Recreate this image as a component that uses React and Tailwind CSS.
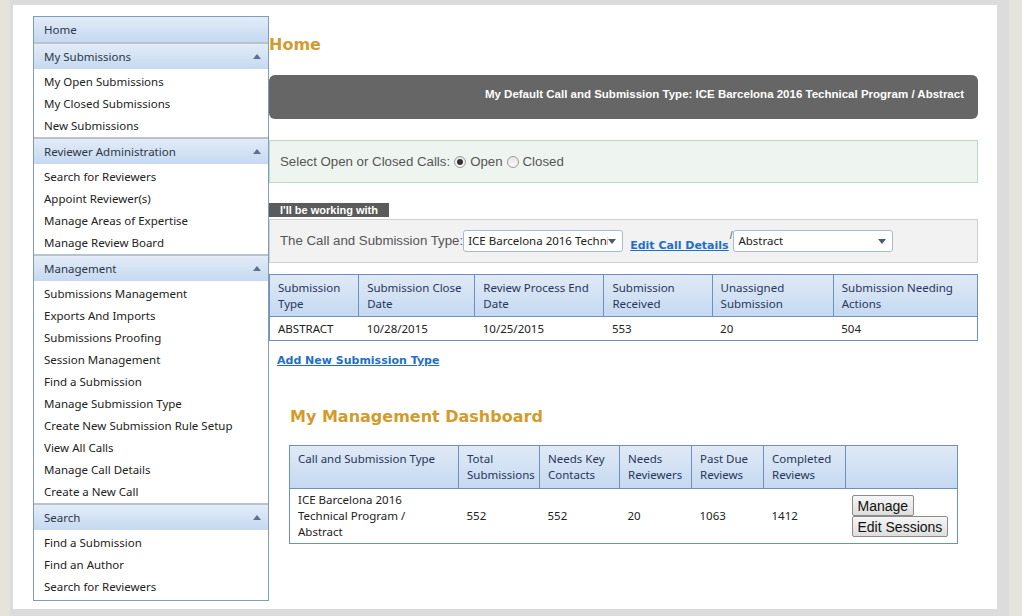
import React from 'react';

const SANS = { fontFamily: '"Noto Sans", "Open Sans", sans-serif' };
const ARIAL = { fontFamily: '"Liberation Sans", Arial, sans-serif' };
const VERDANA = { fontFamily: '"DejaVu Sans", Verdana, sans-serif' };

const MENU = [
  { title: 'My Submissions', items: ['My Open Submissions', 'My Closed Submissions', 'New Submissions'] },
  {
    title: 'Reviewer Administration',
    items: ['Search for Reviewers', 'Appoint Reviewer(s)', 'Manage Areas of Expertise', 'Manage Review Board'],
  },
  {
    title: 'Management',
    items: [
      'Submissions Management',
      'Exports And Imports',
      'Submissions Proofing',
      'Session Management',
      'Find a Submission',
      'Manage Submission Type',
      'Create New Submission Rule Setup',
      'View All Calls',
      'Manage Call Details',
      'Create a New Call',
    ],
  },
  { title: 'Search', items: ['Find a Submission', 'Find an Author', 'Search for Reviewers'] },
];

function Caret() {
  return (
    <svg width="8" height="5" viewBox="0 0 8 5" className="mr-[7px]">
      <polygon points="4,0 8,5 0,5" fill="#5d6f92" />
    </svg>
  );
}

function Sidebar() {
  return (
    <nav
      className="w-[236px] shrink-0 self-start border border-[#7f9dbc] bg-white text-[11.5px] text-[#222] pb-[2px]"
      style={SANS}
    >
      <div className="h-[25px] flex items-center pl-[10px] bg-gradient-to-b from-[#e3ecf7] to-[#c5d9f1] text-[#2d3747]">
        Home
      </div>
      {MENU.map((g) => (
        <div key={g.title} className="border-t-2 border-[#b9c3ce]">
          <div className="h-[25px] flex items-center justify-between pl-[10px] bg-gradient-to-b from-[#e3ecf7] to-[#c5d9f1] text-[#2d3747]">
            <span>{g.title}</span>
            <Caret />
          </div>
          <ul className="pt-[2px]">
            {g.items.map((it) => (
              <li key={it} className="h-[22px] flex items-center pl-[10px]">
                {it}
              </li>
            ))}
          </ul>
        </div>
      ))}
    </nav>
  );
}

function Radio({ checked }) {
  return (
    <span className="inline-flex w-[12px] h-[12px] rounded-full border border-[#9a9a9a] bg-gradient-to-b from-[#e6e6e6] to-[#fafafa] items-center justify-center mx-[4px]">
      {checked && <span className="w-[6px] h-[6px] rounded-full bg-[#333]" />}
    </span>
  );
}

function SelectBox({ text, width }) {
  return (
    <div
      className="h-[22px] shrink-0 flex items-center justify-between border border-[#a9b9cf] rounded-[3px] bg-white pl-[4px] pr-[6px] overflow-hidden"
      style={{ width }}
    >
      <span className="text-[11.5px] text-[#222] whitespace-nowrap overflow-hidden" style={SANS}>
        {text}
      </span>
      <svg width="8" height="5" viewBox="0 0 8 5" className="shrink-0">
        <polygon points="0,0 8,0 4,5" fill="#4b5a78" />
      </svg>
    </div>
  );
}

const TH = 'text-left font-normal align-top px-[8px] pt-[5px] pb-[4px] border-r border-[#6e90bb] leading-[16px]';

function SubmissionTable() {
  const heads = [
    ['Submission', 'Type', 89],
    ['Submission Close', 'Date', 116],
    ['Review Process End', 'Date', 129],
    ['Submission', 'Received', 108],
    ['Unassigned', 'Submission', 121],
    ['Submission Needing', 'Actions', 144],
  ];
  const row = ['ABSTRACT', '10/28/2015', '10/25/2015', '553', '20', '504'];
  return (
    <table className="w-full border border-[#6e90bb] border-collapse text-[11.5px]" style={SANS}>
      <thead>
        <tr className="bg-gradient-to-b from-[#e0eaf6] to-[#c5d9f1] text-[#2a3559] border-b border-[#6e90bb]">
          {heads.map(([a, b, w], i) => (
            <th key={i} className={TH} style={{ width: w }}>
              {a}
              <br />
              {b}
            </th>
          ))}
        </tr>
      </thead>
      <tbody>
        <tr className="text-[#222]">
          {row.map((c, i) => (
            <td key={i} className="px-[8px] h-[24px] leading-[16px]">
              {c}
            </td>
          ))}
        </tr>
      </tbody>
    </table>
  );
}

function Btn({ children }) {
  return (
    <button
      className="block h-[21px] px-[5px] whitespace-nowrap border border-[#8c8c8c] rounded-[2px] bg-gradient-to-b from-[#f6f6f6] to-[#dedede] text-[14px] text-[#111] leading-[18px]"
      style={ARIAL}
    >
      {children}
    </button>
  );
}

function DashboardTable() {
  const heads = [
    [['Call and Submission Type'], 169],
    [['Total', 'Submissions'], 81],
    [['Needs Key', 'Contacts'], 80],
    [['Needs', 'Reviewers'], 72],
    [['Past Due', 'Reviews'], 72],
    [['Completed', 'Reviews'], 82],
    [[''], 112],
  ];
  return (
    <table className="w-full table-fixed border border-[#6e90bb] border-collapse text-[11.5px]" style={SANS}>
      <thead>
        <tr className="bg-gradient-to-b from-[#e0eaf6] to-[#c5d9f1] text-[#2a3559] border-b border-[#6e90bb]">
          {heads.map(([lines, w], i) => (
            <th key={i} className={`${TH} h-[43px]`} style={{ width: w }}>
              {lines.map((l, j) => (
                <div key={j}>{l}</div>
              ))}
            </th>
          ))}
        </tr>
      </thead>
      <tbody>
        <tr className="text-[#222]">
          <td className="px-[8px] py-[3px] leading-[16px]">
            ICE Barcelona 2016
            <br />
            Technical Program /
            <br />
            Abstract
          </td>
          <td className="px-[8px]">552</td>
          <td className="px-[8px]">552</td>
          <td className="px-[8px]">20</td>
          <td className="px-[8px]">1063</td>
          <td className="px-[8px]">1412</td>
          <td className="pl-[6px] pr-[8px] py-[6px]">
            <Btn>Manage</Btn>
            <Btn>Edit Sessions</Btn>
          </td>
        </tr>
      </tbody>
    </table>
  );
}

function Main() {
  return (
    <main className="flex-1 min-w-0 pt-[19px]">
      <h1 className="text-[16px] font-bold text-[#d29c2d] leading-[20px]" style={VERDANA}>
        Home
      </h1>

      <div
        className="mt-[20px] h-[44px] rounded-[6px] bg-[#666] flex items-center justify-end pr-[14px] pb-[4px] text-white text-[11.5px] font-bold"
        style={ARIAL}
      >
        My Default Call and Submission Type: ICE Barcelona 2016 Technical Program / Abstract
      </div>

      <div
        className="mt-[21px] h-[43px] border border-[#bcd9c8] bg-[#eef5f0] flex items-center pl-[10px] text-[13.25px] text-[#555]"
        style={ARIAL}
      >
        Select Open or Closed Calls:
        <Radio checked />
        Open
        <Radio />
        Closed
      </div>

      <div className="mt-[20px]">
        <div
          className="w-fit h-[14px] bg-[#5b5b5b] text-white text-[11px] font-bold leading-[14px] px-[11px]"
          style={ARIAL}
        >
          I'll be working with
        </div>
        <div className="mt-[2px] h-[44px] border border-[#cfcfcf] bg-[#f2f2f2] flex items-center pl-[10px]">
          <span className="text-[13.25px] text-[#555] whitespace-nowrap" style={ARIAL}>
            The Call and Submission Type:
          </span>
          <SelectBox text="ICE Barcelona 2016 Technical Program" width={160} />
          <a
            className="ml-[7px] mt-[10px] text-[11px] font-bold text-[#1f6fc8] underline whitespace-nowrap"
            style={VERDANA}
          >
            Edit Call Details
          </a>
          <span className="text-[10px] text-[#555] self-start mt-[8px] mx-[1px]" style={ARIAL}>
            /
          </span>
          <SelectBox text="Abstract" width={160} />
        </div>
      </div>

      <div className="mt-[11px]">
        <SubmissionTable />
      </div>

      <a
        className="inline-block mt-[12px] ml-[8px] text-[11px] font-bold text-[#1f6fc8] underline"
        style={VERDANA}
      >
        Add New Submission Type
      </a>

      <div className="px-[20px]">
        <h2 className="mt-[36px] text-[16px] font-bold text-[#d29c2d] leading-[22px] pl-[1px]" style={VERDANA}>
          My Management Dashboard
        </h2>
        <div className="mt-[17px]">
          <DashboardTable />
        </div>
      </div>
    </main>
  );
}

export default function App() {
  return (
    <div className="w-[1022px] h-[616px] bg-[#e4e4dc] pl-[10px] pr-[13px] overflow-hidden">
      <div className="h-full bg-[#dcdcdc] pt-[5px] pb-[7px] pl-[3px] pr-[12px]">
        <div className="h-full bg-white flex pl-[20px] pr-[19px] pt-[11px]">
          <Sidebar />
          <Main />
        </div>
      </div>
    </div>
  );
}
